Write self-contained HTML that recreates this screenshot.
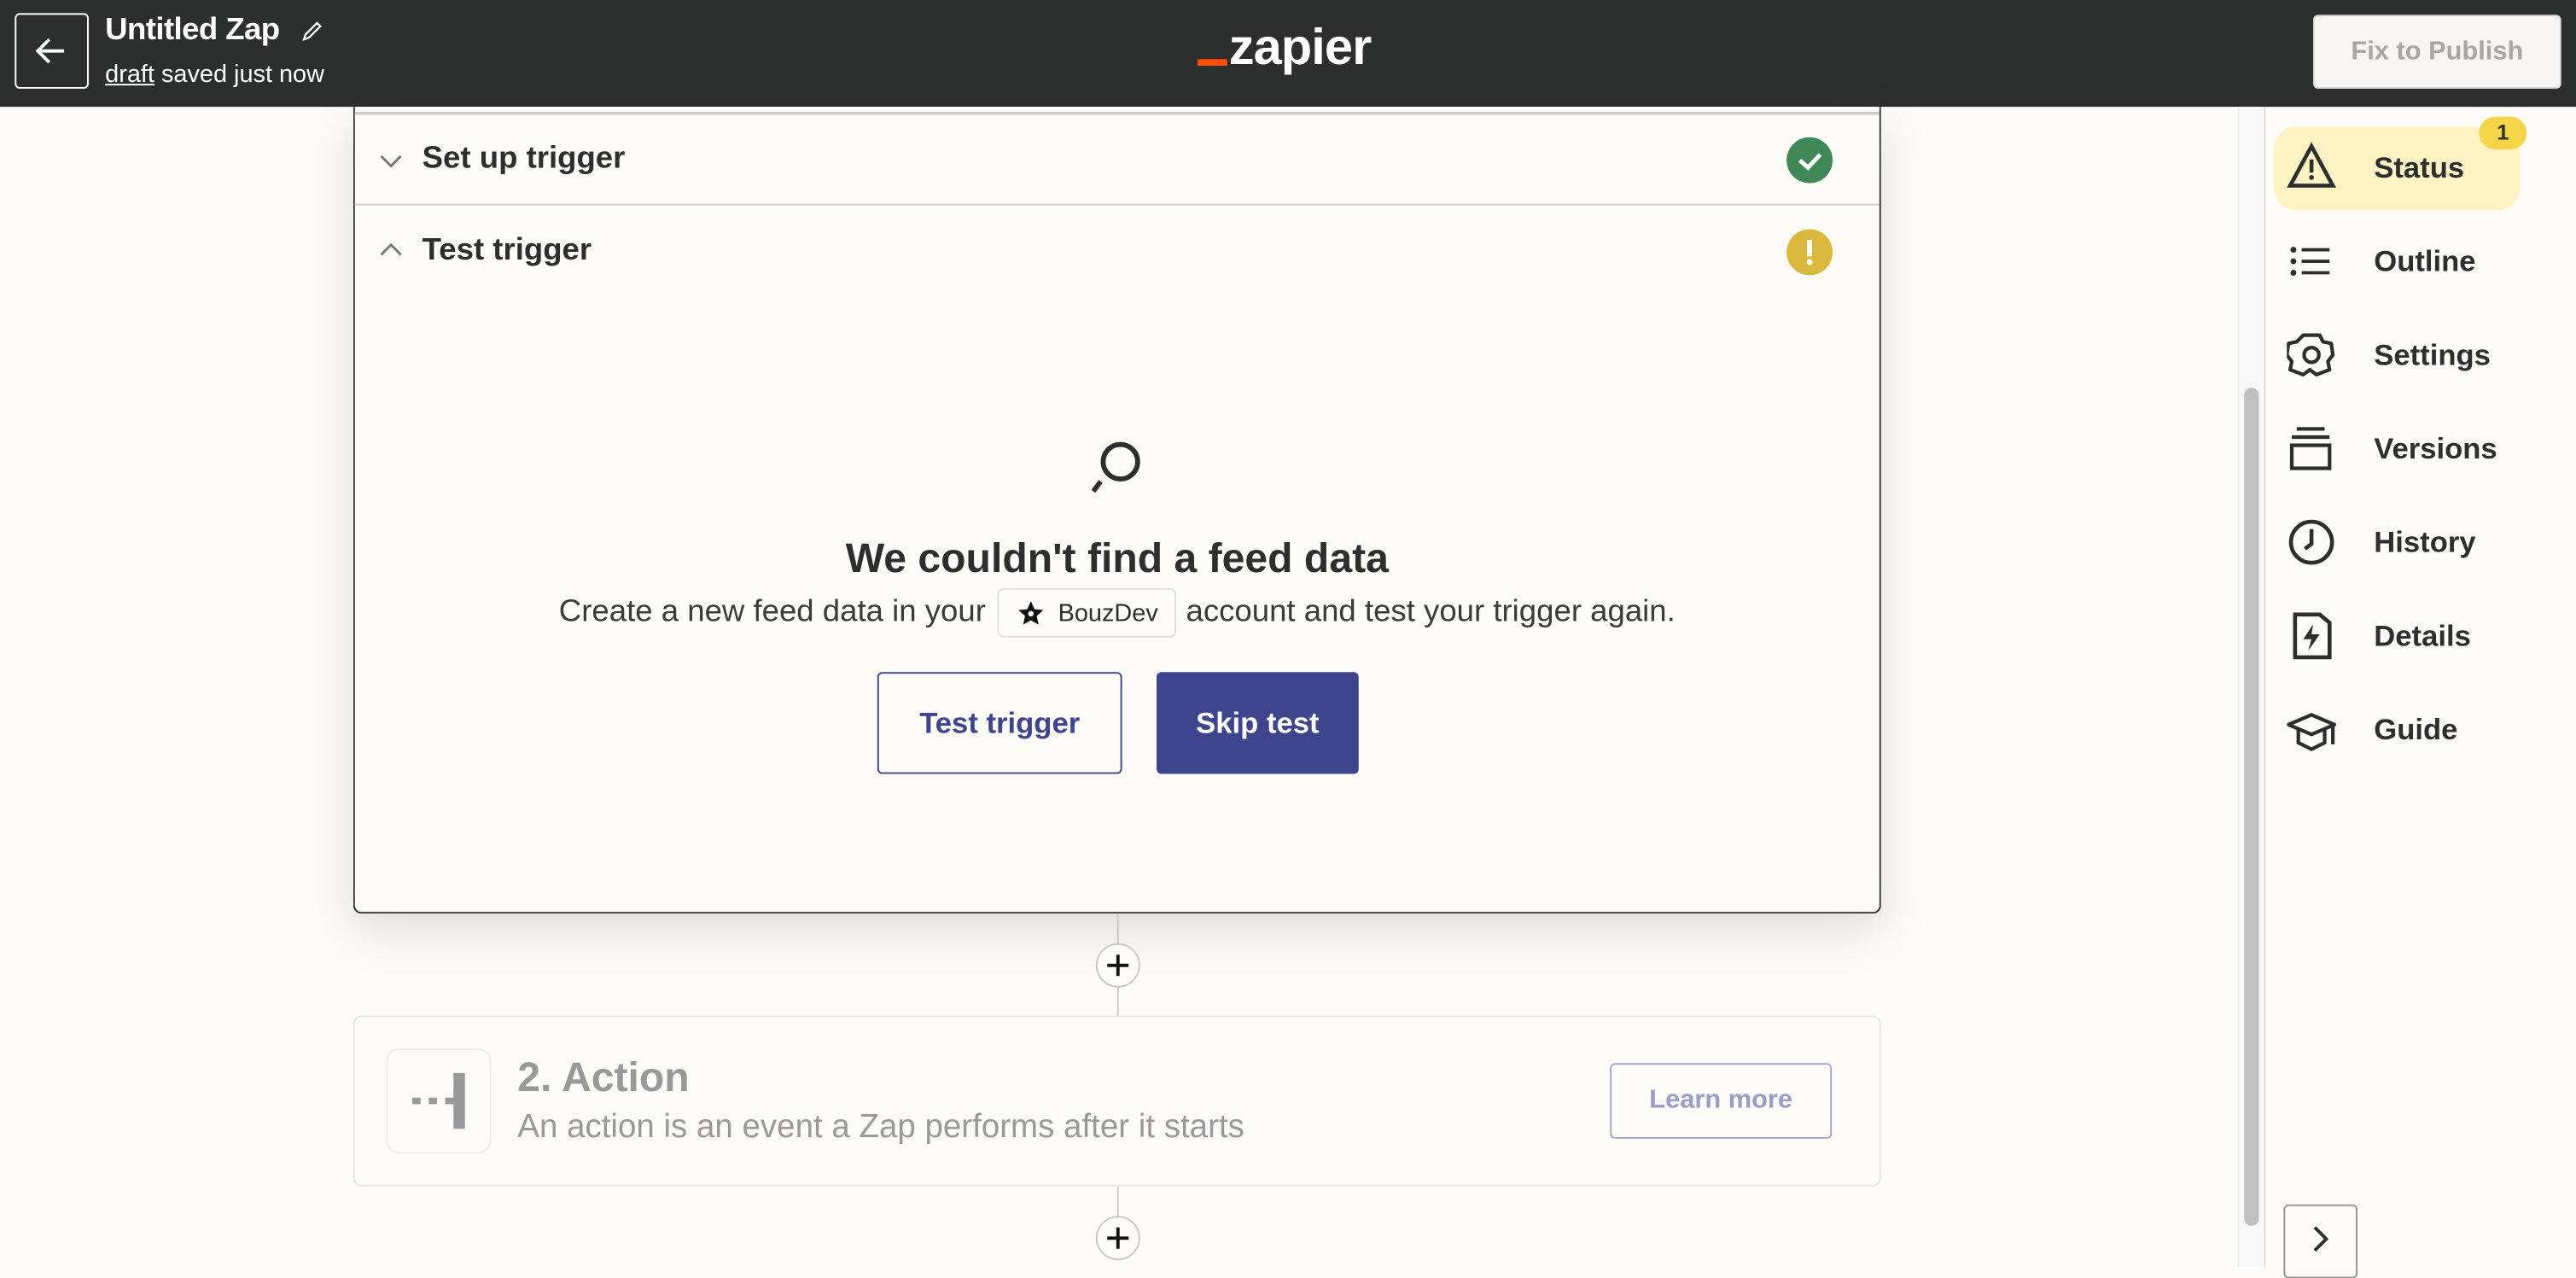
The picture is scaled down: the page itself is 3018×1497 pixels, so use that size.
<!DOCTYPE html>
<html><head><meta charset="utf-8"><style>
*{box-sizing:border-box;margin:0;padding:0}
html,body{width:3018px;height:1484px;overflow:hidden;background:#fdfcf8}
#s{position:absolute;left:0;top:0;width:1568px;height:771px;transform:scale(1.92474);transform-origin:0 0;font-family:"Liberation Sans",sans-serif;color:#2d2e2e;background:#fdfcf8}
.a{position:absolute}
.hdr{left:0;top:0;width:1568px;height:65px;background:#2d2e2e}
.nav{font-size:18px;font-weight:bold;left:1445px;color:#2d2e2e;line-height:20px}
.ic{left:1392px;width:30px;height:30px}
</style></head><body><div id="s">
<div class="a hdr"></div>
<div class="a" style="left:9px;top:8px;width:45px;height:46px;border:1px solid #fff;border-radius:3px"></div>
<svg class="a" style="left:20px;top:20px" width="22" height="22" viewBox="0 0 22 22"><path d="M19 11H4M10 4L3 11l7 7" stroke="#fff" stroke-width="2" fill="none"/></svg>
<div class="a" style="left:64px;top:8px;color:#fff;font-size:19px;font-weight:bold;letter-spacing:-0.3px">Untitled Zap</div>
<svg class="a" style="left:183px;top:12px" width="14" height="14" viewBox="0 0 14 14"><path d="M2 12l1-3 7-7 2 2-7 7z" stroke="#fff" stroke-width="1.2" fill="none"/></svg>
<div class="a" style="left:64px;top:37px;color:#fff;font-size:15px"><span style="text-decoration:underline">draft</span> saved just now</div>
<div class="a" style="left:729px;top:36px;width:18px;height:4px;background:#ff4f00"></div>
<div class="a" style="left:748px;top:11px;color:#fff;font-size:31px;font-weight:bold;letter-spacing:-0.5px">zapier</div>
<div class="a" style="left:1408px;top:9px;width:151px;height:45px;background:#f7f6f4;border:1px solid #dcdad5;border-radius:3px;color:#a8a7a4;font-size:16px;font-weight:bold;text-align:center;line-height:43px">Fix to Publish</div>

<!-- card -->
<div class="a" style="left:215px;top:65px;width:930px;height:491px;background:#fdfcf8;border:1px solid #2d2e2e;border-top:none;border-radius:0 0 5px 5px;box-shadow:0 10px 30px rgba(0,0,0,0.13)"></div>
<div class="a" style="left:216px;top:68px;width:928px;height:2px;background:#cfcecc"></div>
<div class="a" style="left:216px;top:124px;width:928px;height:1px;background:#cfcecc"></div>
<svg class="a" style="left:230px;top:92px" width="16" height="12" viewBox="0 0 16 12"><path d="M2 3l6 6 6-6" stroke="#777" stroke-width="1.5" fill="none"/></svg>
<div class="a" style="left:257px;top:86px;font-size:19px;font-weight:bold">Set up trigger</div>
<svg class="a" style="left:1087px;top:83px" width="29" height="29" viewBox="0 0 29 29"><circle cx="14.5" cy="14.5" r="14" fill="#3f8856"/><path d="M8.5 14.5l5 4.5 7.5-8" stroke="#fff" stroke-width="2.6" fill="none"/></svg>
<svg class="a" style="left:230px;top:146px" width="16" height="12" viewBox="0 0 16 12"><path d="M2 9l6-6 6 6" stroke="#777" stroke-width="1.5" fill="none"/></svg>
<div class="a" style="left:257px;top:142px;font-size:19px;font-weight:bold">Test trigger</div>
<svg class="a" style="left:1087px;top:139px" width="29" height="29" viewBox="0 0 29 29"><circle cx="14.5" cy="14.5" r="14" fill="#d9b83d"/><rect x="13" y="7" width="3" height="10" fill="#fff"/><circle cx="14.5" cy="20.5" r="1.8" fill="#fff"/></svg>

<svg class="a" style="left:660px;top:266px" width="40" height="40" viewBox="0 0 40 40"><circle cx="22" cy="15" r="10.5" stroke="#2d2e2e" stroke-width="3" fill="none"/><path d="M10 27l-4.5 6" stroke="#2d2e2e" stroke-width="3"/></svg>
<div class="a" style="left:216px;top:326px;width:928px;text-align:center;font-size:25px;font-weight:bold">We couldn't find a feed data</div>
<div class="a" style="left:216px;top:357px;width:928px;height:32px;display:flex;justify-content:center;align-items:center;font-size:19px;color:#3a3b3b;white-space:nowrap">
<span>Create a new feed data in your</span>
<span style="display:inline-flex;align-items:center;margin:0 6px 0 7px;height:30px;padding:0 10px 0 11px;border:1px solid #e3e1dc;border-radius:4px;font-size:15px;color:#2d2e2e"><svg width="17" height="17" viewBox="0 0 20 20" style="margin-right:8px"><path d="M10 1l2.6 5.8 6.3.6-4.7 4.2 1.3 6.2L10 14.7l-5.5 3.1 1.3-6.2L1.1 7.4l6.3-.6z" fill="#111"/><circle cx="10" cy="10" r="2" fill="#fff"/></svg>BouzDev</span>
<span>account and test your trigger again.</span></div>
<div class="a" style="left:534px;top:409px;width:149px;height:62px;border:1px solid #3f458c;border-radius:3px;color:#3f458c;font-size:18px;font-weight:bold;text-align:center;line-height:60px">Test trigger</div>
<div class="a" style="left:704px;top:409px;width:123px;height:62px;background:#3f458c;border-radius:3px;color:#fff;font-size:18px;font-weight:bold;text-align:center;line-height:62px">Skip test</div>

<!-- connectors -->
<div class="a" style="left:680px;top:556px;width:1px;height:62px;background:#c9c8c5"></div>
<div class="a" style="left:667px;top:574px;width:27px;height:27px;border:1px solid #c9c8c5;border-radius:50%;background:#fdfcf8"></div>
<svg class="a" style="left:671px;top:578px" width="19" height="19" viewBox="0 0 19 19"><path d="M9.5 3v13M3 9.5h13" stroke="#111" stroke-width="2"/></svg>
<div class="a" style="left:680px;top:721px;width:1px;height:30px;background:#c9c8c5"></div>
<div class="a" style="left:667px;top:740px;width:27px;height:27px;border:1px solid #c9c8c5;border-radius:50%;background:#fdfcf8"></div>
<svg class="a" style="left:671px;top:744px" width="19" height="19" viewBox="0 0 19 19"><path d="M9.5 3v13M3 9.5h13" stroke="#111" stroke-width="2"/></svg>

<!-- action -->
<div class="a" style="left:215px;top:618px;width:930px;height:104px;border:1px solid #e7e5e0;border-radius:5px;background:#fdfcf8"></div>
<div class="a" style="left:235px;top:638px;width:64px;height:64px;border:1px solid #efedea;border-radius:8px"></div>
<div class="a" style="left:251px;top:668px;width:5px;height:4px;background:#999"></div>
<div class="a" style="left:261px;top:668px;width:5px;height:4px;background:#999"></div>
<div class="a" style="left:271px;top:668px;width:6px;height:4px;background:#999"></div>
<div class="a" style="left:276px;top:653px;width:7px;height:34px;background:#999"></div>
<div class="a" style="left:315px;top:642px;font-size:25px;font-weight:bold;color:#999">2. Action</div>
<div class="a" style="left:315px;top:675px;font-size:20px;color:#999">An action is an event a Zap performs after it starts</div>
<div class="a" style="left:980px;top:647px;width:135px;height:46px;border:1px solid #a5a7c9;border-radius:3px;color:#9a9dc6;font-size:16px;font-weight:bold;text-align:center;line-height:44px">Learn more</div>

<!-- scrollbar -->
<div class="a" style="left:1362px;top:65px;width:15px;height:706px;background:#f8f8f8;border-left:1px solid #ececec"></div>
<div class="a" style="left:1366px;top:236px;width:9px;height:510px;background:#c1c1c1;border-radius:5px"></div>
<div class="a" style="left:1378px;top:65px;width:1px;height:706px;background:#dedede"></div>

<!-- sidebar -->
<div class="a" style="left:1384px;top:77px;width:150px;height:51px;background:#fff3c4;border-radius:14px"></div>
<div class="a" style="left:1509px;top:71px;width:29px;height:20px;background:#f5d547;border-radius:10px;font-size:13px;font-weight:bold;text-align:center;line-height:20px">1</div>
<svg class="a ic" style="top:86px" viewBox="0 0 30 30"><path d="M15 3L2 27h26z" stroke="#2d2e2e" stroke-width="2.4" fill="none" stroke-linejoin="miter"/><rect x="13.8" y="11" width="2.4" height="8" fill="#2d2e2e"/><circle cx="15" cy="22" r="1.5" fill="#2d2e2e"/></svg>
<div class="a nav" style="top:92px">Status</div>
<svg class="a ic" style="top:145px" viewBox="0 0 30 30"><circle cx="4" cy="7" r="1.8" fill="#2d2e2e"/><circle cx="4" cy="14" r="1.8" fill="#2d2e2e"/><circle cx="4" cy="21" r="1.8" fill="#2d2e2e"/><path d="M9 7h17M9 14h17M9 21h17" stroke="#2d2e2e" stroke-width="2"/></svg>
<div class="a nav" style="top:149px">Outline</div>
<svg class="a ic" style="top:201px" viewBox="0 0 30 30"><path d="M10 3h10l2 4 5 1 1 7-3 4 1 5-8 3-4-3-4 3-8-3 1-5-3-4 1-7 5-1z" stroke="#2d2e2e" stroke-width="2.2" fill="none" stroke-linejoin="round"/><circle cx="15" cy="15" r="4.5" stroke="#2d2e2e" stroke-width="2.2" fill="none"/></svg>
<div class="a nav" style="top:206px">Settings</div>
<svg class="a ic" style="top:258px" viewBox="0 0 30 30"><path d="M6 3h17M3 8h23" stroke="#2d2e2e" stroke-width="2.2"/><rect x="3" y="13" width="23" height="14" stroke="#2d2e2e" stroke-width="2.2" fill="none"/></svg>
<div class="a nav" style="top:263px">Versions</div>
<svg class="a ic" style="top:315px" viewBox="0 0 30 30"><circle cx="15" cy="15" r="12.5" stroke="#2d2e2e" stroke-width="2.4" fill="none"/><path d="M15 7v9l-4 3" stroke="#2d2e2e" stroke-width="2.4" fill="none"/></svg>
<div class="a nav" style="top:320px">History</div>
<svg class="a ic" style="top:372px" viewBox="0 0 30 30"><path d="M5 2h15l6 5v21H5z" stroke="#2d2e2e" stroke-width="2.4" fill="none"/><path d="M16 8l-6 9h5l-2 7 7-10h-5z" fill="#2d2e2e"/></svg>
<div class="a nav" style="top:377px">Details</div>
<svg class="a ic" style="top:430px" viewBox="0 0 30 30"><path d="M1 11l14-6 14 6-14 6z" stroke="#2d2e2e" stroke-width="2.2" fill="none" stroke-linejoin="round"/><path d="M7 14v8l8 4 8-4v-8M28 11v12" stroke="#2d2e2e" stroke-width="2.2" fill="none"/></svg>
<div class="a nav" style="top:434px">Guide</div>

<div class="a" style="left:1390px;top:733px;width:45px;height:45px;border:1px solid #959490;border-radius:3px"></div>
<svg class="a" style="left:1404px;top:745px" width="16" height="18" viewBox="0 0 16 18"><path d="M5 2l7 7-7 7" stroke="#2d2e2e" stroke-width="2" fill="none"/></svg>
</div></body></html>
